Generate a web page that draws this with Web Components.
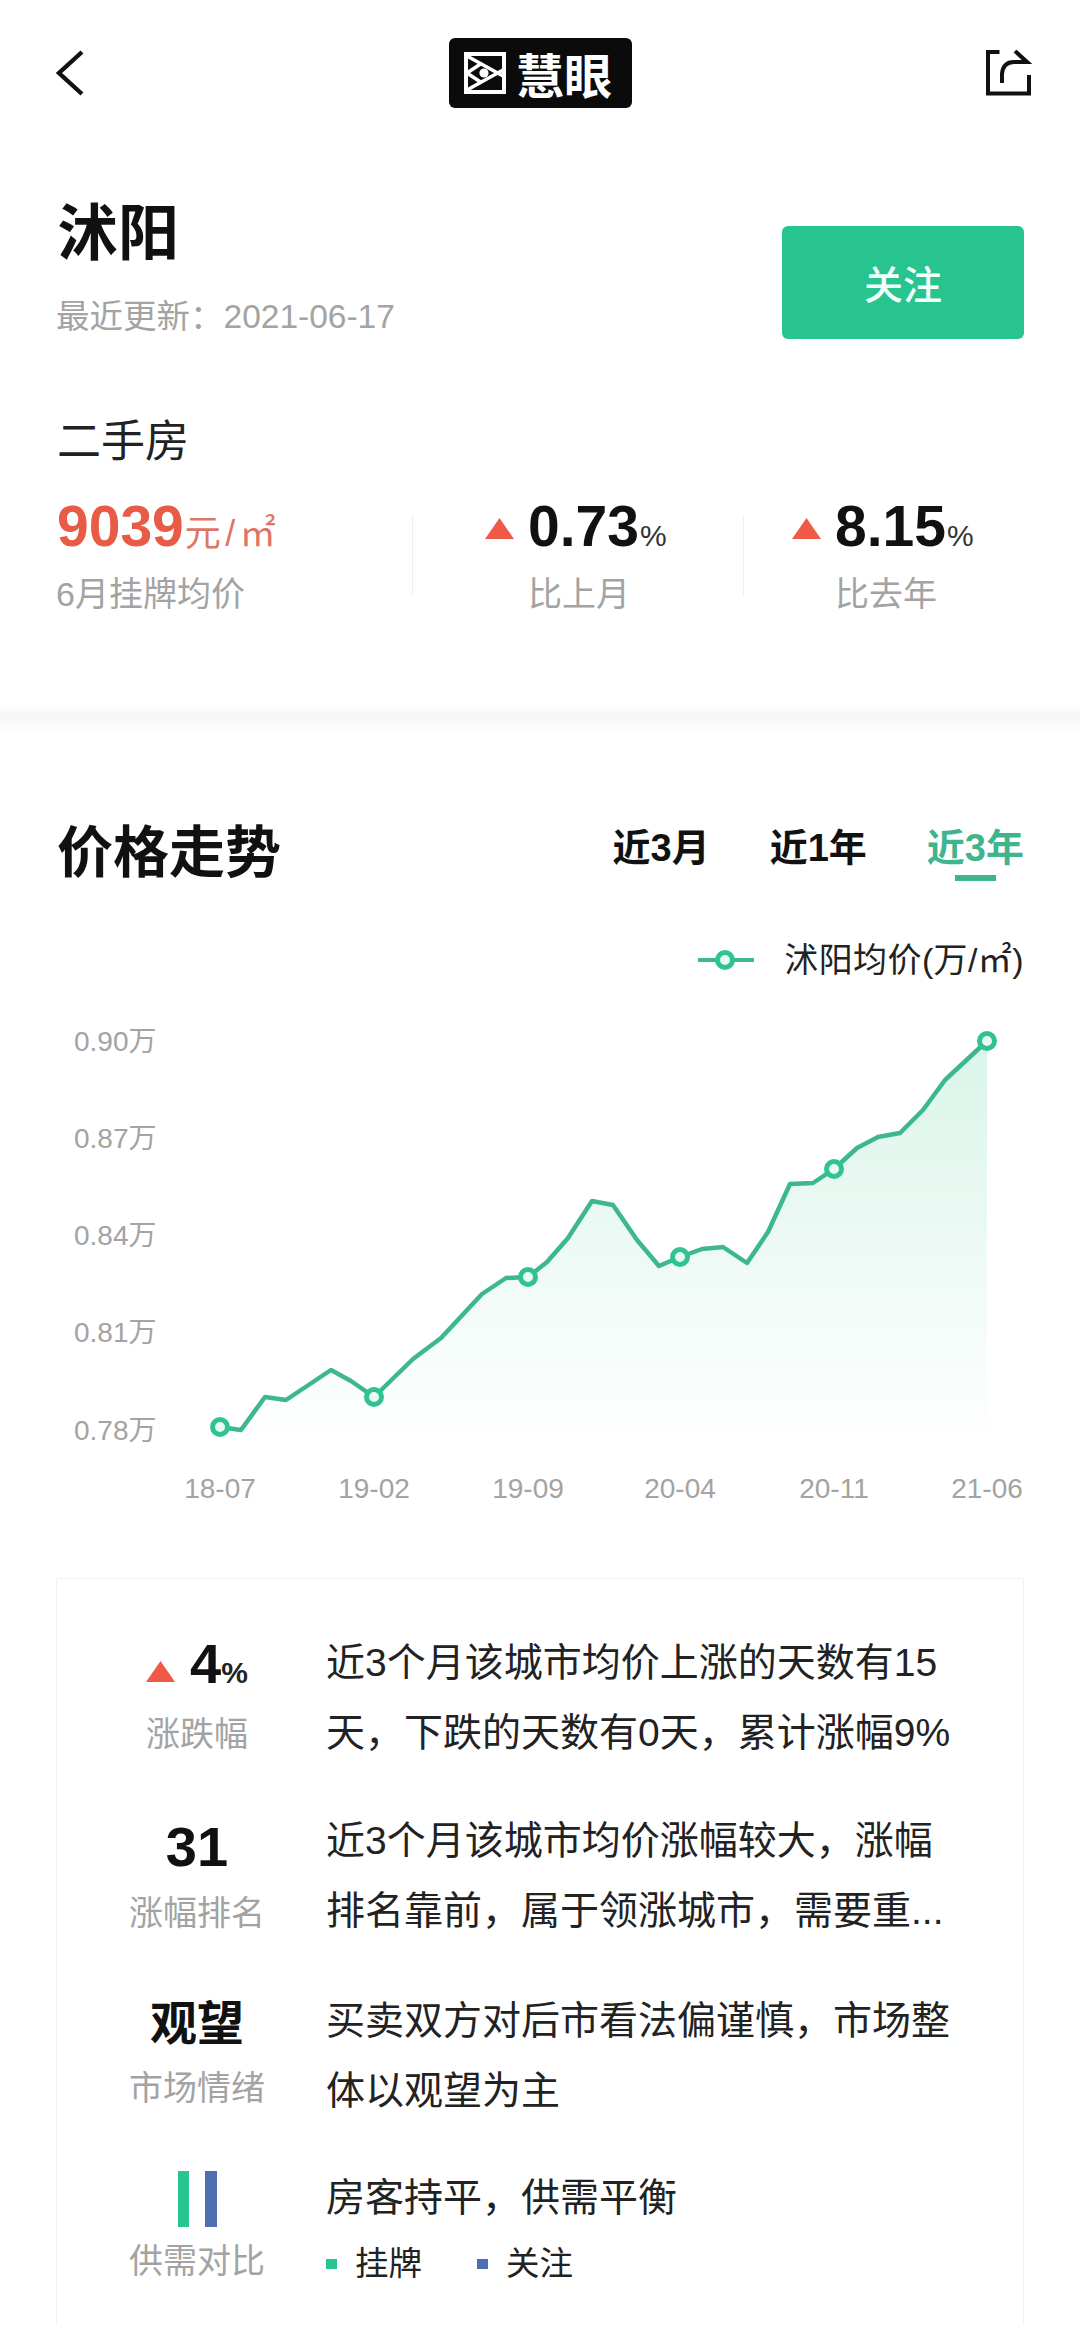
<!DOCTYPE html>
<html lang="zh-CN">
<head>
<meta charset="utf-8">
<title>沭阳</title>
<style>
html,body{margin:0;padding:0;background:#fff;height:2325px;overflow:hidden}
body{font-family:"Liberation Sans","Noto Sans CJK SC",sans-serif;color:#222}
</style>
</head>
<body>
<app-nav></app-nav>
<city-head name="沭阳" updated="最近更新：2021-06-17" action="关注"></city-head>
<market-stats></market-stats>
<band-divider></band-divider>
<trend-head></trend-head>
<price-chart></price-chart>
<insight-card>
  <insight-row label="涨跌幅" style="--vh:60px;--vt:10px;--lm:16px">
    <change-value slot="value"></change-value>
    近3个月该城市均价上涨的天数有15天，下跌的天数有0天，累计涨幅9%
  </insight-row>
  <insight-row label="涨幅排名" style="--vh:60px;--vt:11px;--lm:16px">
    <b slot="value">31</b>
    近3个月该城市均价涨幅较大，涨幅排名靠前，属于领涨城市，需要重...
  </insight-row>
  <insight-row label="市场情绪" style="--vh:60px;--vt:4px;--lm:18px;margin-top:2px">
    <b slot="value" style="font-size:47px;font-family:'Noto Sans CJK SC',sans-serif">观望</b>
    买卖双方对后市看法偏谨慎，市场整体以观望为主
  </insight-row>
  <insight-row label="供需对比" style="--vh:56px;--vt:8px;--lm:14px;margin-top:-1px">
    <supply-bars slot="value"></supply-bars>
    房客持平，供需平衡
    <supply-legend slot="extra"></supply-legend>
  </insight-row>
</insight-card>

<script>
function def(name, html, setup){
  customElements.define(name, class extends HTMLElement{
    constructor(){
      super();
      const r=this.attachShadow({mode:"open"});
      r.innerHTML=html;
    }
    connectedCallback(){ if(setup) setup(this,this.shadowRoot); }
  });
}

def("app-nav",`<style>
:host{display:grid;grid-template-columns:1fr auto 1fr;align-items:center;height:146px;padding:0 48px 0 49px;box-sizing:border-box}
svg{display:block}
.back{margin-left:7px}
.share{justify-self:end}
.logo{width:183px;height:70px;background:#0b0b0b;border-radius:6px;display:flex;align-items:center;padding-left:15px;box-sizing:border-box;gap:10px;color:#fff;font:700 48px/70px "Noto Sans CJK SC",sans-serif}
</style>
<svg class="back" width="28" height="46" viewBox="0 0 28 46"><path d="M26 2 L3 23 L26 44" fill="none" stroke="#111" stroke-width="4.4"/></svg>
<div class="logo"><svg width="42" height="42" viewBox="0 0 42 42"><rect x="2" y="2" width="38" height="38" fill="#0b0b0b" stroke="#fff" stroke-width="4"/><path d="M3 4 L39 24 M3 38 L39 18 M3 21 L18 11 M3 21 L18 31" stroke="#fff" stroke-width="3.6" fill="none"/><circle cx="20" cy="21" r="4.6" fill="#fff"/></svg><span>慧眼</span></div>
<svg class="share" width="46" height="46" viewBox="0 0 46 46"><path d="M13.5 2 H2 V43.5 H43 V25" fill="none" stroke="#111" stroke-width="4"/><path d="M29 1 L41 12 H28 Q17 12 16 24 V33" fill="none" stroke="#111" stroke-width="4"/></svg>`);

def("city-head",`<style>
:host{display:flex;justify-content:space-between;align-items:flex-start;padding:52px 56px 0 56px}
h1{margin:0;font:700 61px/62px "Noto Sans CJK SC",sans-serif;color:#111;padding-left:1px}
p{margin:37px 0 0;font-size:33.5px;line-height:40px;color:#a3a3a3}
button{margin-top:28px;width:242px;height:113px;border:0;border-radius:6px;background:#27c490;color:#f2fffa;font:500 39px/113px "Noto Sans CJK SC",sans-serif;padding:0}
</style>
<div><h1 id="n"></h1><p id="u"></p></div><button id="a"></button>`,
(h,r)=>{r.getElementById("n").textContent=h.getAttribute("name");r.getElementById("u").textContent=h.getAttribute("updated");r.getElementById("a").textContent=h.getAttribute("action");});

def("up-arrow",`<style>
:host{display:inline-block;width:29px;height:21px;vertical-align:middle}
svg{display:block;width:100%;height:100%}
</style><svg viewBox="0 0 29 21" preserveAspectRatio="none"><path d="M14.5 0 L29 21 H0 Z" fill="#ee5a45"/></svg>`);

def("change-value",`<style>
:host{display:flex;align-items:baseline;font-size:56px;line-height:60px;color:#111}
up-arrow{align-self:center;margin:6px 15px 0 0}
b{font-weight:700}
small{font-size:30px;font-weight:700;color:#222}
</style><up-arrow></up-arrow><b>4</b><small>%</small>`);

def("stat-item",`<style>
:host{display:block;box-sizing:border-box}
.top{display:flex;align-items:baseline;height:60px;font-size:57px;line-height:60px;font-weight:700;color:#111}
.top up-arrow{align-self:center;margin:4px 14px 0 0}
small{font-size:30px;font-weight:400;color:#333;margin-left:1px}
.lab{margin-top:18px;font-size:34px;line-height:40px;color:#a3a3a3}
:host([arrow]) .lab{padding-left:43px}
</style>
<div class="top"><up-arrow></up-arrow><span id="v"></span><small>%</small></div>
<div class="lab" id="l"></div>`,
(h,r)=>{r.getElementById("v").textContent=h.getAttribute("value");r.getElementById("l").textContent=h.getAttribute("label");});

def("market-stats",`<style>
:host{display:block;padding:74px 0 0 56px}
h2{margin:0 0 33px;font:400 44px/50px "Noto Sans CJK SC",sans-serif;color:#222;padding-left:1px}
.row{display:flex;align-items:center}
.main{width:356px;box-sizing:border-box}
.price{height:60px;line-height:60px;color:#e85b45;white-space:nowrap;padding-left:1px}
.price b{font-size:57px}
.price span{font-size:36px;color:#df7565;letter-spacing:4.5px;margin-left:1px}
.lab{margin-top:18px;font-size:34px;line-height:40px;color:#a3a3a3}
i{display:block;width:1px;height:80px;background:#eceff0;flex:none}
.a{width:330px;padding-left:72px;box-sizing:border-box}
.b{padding-left:48px}
</style>
<h2>二手房</h2>
<div class="row">
  <div class="main"><div class="price"><b>9039</b><span>元/㎡</span></div><div class="lab">6月挂牌均价</div></div>
  <i></i><stat-item class="a" arrow value="0.73" label="比上月"></stat-item>
  <i></i><stat-item class="b" arrow value="8.15" label="比去年"></stat-item>
</div>`);

def("band-divider",`<style>
:host{display:block;height:28px;margin-top:90px;background:linear-gradient(#fff,#f7f7f7 35%,#f8f8f8 60%,#fff)}
</style>`);

def("trend-head",`<style>
:host{display:flex;justify-content:space-between;align-items:flex-start;padding:86px 56px 0 57px}
h2{margin:0;font:700 56px/60px "Noto Sans CJK SC",sans-serif;color:#111}
.tabs{display:flex;gap:60px;margin-top:8px}
.tab{display:flex;flex-direction:column;align-items:center;font-size:38px;line-height:44px;font-weight:700;color:#111}
.tab.on{color:#3fb58e}
.tab.on::after{content:"";display:block;width:41px;height:6px;margin-top:5px;background:#3fb58e}
</style>
<h2>价格走势</h2>
<div class="tabs"><div class="tab">近3月</div><div class="tab">近1年</div><div class="tab on">近3年</div></div>`);

const PTS=[[220,1427],[241,1430],[265,1397],[286,1400],[331,1370],[351,1381],[374,1397],[413,1359],[441,1338],[482,1294],[506,1278],[528,1277],[547,1262],[568,1238],[592,1201],[613,1205],[637,1240],[659,1266],[680,1257],[702,1249],[723,1247],[747,1263],[768,1232],[790,1184],[813,1183],[834,1169],[857,1148],[878,1137],[900,1133],[923,1110],[945,1080],[987,1041]];
const MARKS=[[220,1427],[374,1397],[528,1277],[680,1257],[834,1169],[987,1041]];
const XL=[["18-07",220],["19-02",374],["19-09",528],["20-04",680],["20-11",834],["21-06",987]];
const YL=[["0.90万",1041],["0.87万",1138],["0.84万",1235],["0.81万",1332],["0.78万",1430]];
const line=PTS.map(p=>p.join(",")).join(" ");

def("price-chart",`<style>
:host{display:block}
.legend{display:flex;justify-content:flex-end;align-items:center;height:40px;margin-top:59px;padding-right:56px;font-size:34px;line-height:40px;color:#222;gap:30px}
.legend span{letter-spacing:.4px}
svg{display:block}
text{font-family:"Liberation Sans","Noto Sans CJK SC",sans-serif;font-size:28px;fill:#a3a3a3}
</style>
<div class="legend"><svg width="56" height="24" viewBox="0 0 56 24"><path d="M0 12H56" stroke="#3db88e" stroke-width="4"/><circle cx="27" cy="12" r="7.5" fill="#e8f8f2" stroke="#2fc393" stroke-width="5"/></svg><span>沭阳均价(万/㎡)</span></div>
<svg width="1080" height="560" viewBox="0 980 1080 560">
<defs><linearGradient id="g" x1="0" y1="1041" x2="0" y2="1432" gradientUnits="userSpaceOnUse"><stop offset="0" stop-color="#d9f5e9"/><stop offset=".55" stop-color="#eefaf5"/><stop offset="1" stop-color="#fdfffe"/></linearGradient></defs>
<polygon points="${line} 987,1432 220,1432" fill="url(#g)"/>
<polyline points="${line}" fill="none" stroke="#3db88e" stroke-width="4.5" stroke-linejoin="round" stroke-linecap="round"/>
${MARKS.map(m=>`<circle cx="${m[0]}" cy="${m[1]}" r="7.5" fill="#e8f8f2" stroke="#2fc393" stroke-width="5"/>`).join("")}
${YL.map(y=>`<text x="74" y="${y[1]+10}">${y[0]}</text>`).join("")}
${XL.map(x=>`<text x="${x[1]}" y="1498" text-anchor="middle">${x[0]}</text>`).join("")}
</svg>`);

def("insight-card",`<style>
:host{display:flex;flex-direction:column;gap:38px;box-sizing:border-box;margin:38px 56px 0;padding:49px 0 80px 9px;border:1px solid #f3f3f3;border-bottom:0}
</style><slot></slot>`);

def("insight-row",`<style>
:host{display:grid;grid-template-columns:260px 640px;min-height:140px;align-items:start}
.left{display:flex;flex-direction:column;align-items:center;padding:var(--vt) 0 0 2px}
.val{height:var(--vh);display:flex;align-items:center;justify-content:center;line-height:60px}
::slotted([slot=value]){font-size:56px;color:#111}
.lab{margin-top:var(--lm);font-size:34px;line-height:40px;color:#a3a3a3}
.txt{font-size:39px;line-height:70px;color:#222}
</style>
<div class="left"><div class="val"><slot name="value"></slot></div><div class="lab" id="l"></div></div>
<div class="txt"><slot></slot><slot name="extra"></slot></div>`,
(h,r)=>{r.getElementById("l").textContent=h.getAttribute("label");});

def("supply-bars",`<style>
:host{display:flex;gap:16px;height:56px}
i{display:block;width:11px;background:#27c490}
i+i{width:12px;background:#4f6fb3}
</style><i></i><i></i>`);

def("supply-legend",`<style>
:host{display:flex;align-items:center;margin-top:11px;height:40px;font-size:33.5px;line-height:40px;color:#222}
i{display:block;width:11px;height:10px;background:#27c490;margin-right:18px}
i.b{background:#4f6fb3;margin-left:55px}
</style><i></i><span>挂牌</span><i class="b"></i><span>关注</span>`);
</script>
</body>
</html>
